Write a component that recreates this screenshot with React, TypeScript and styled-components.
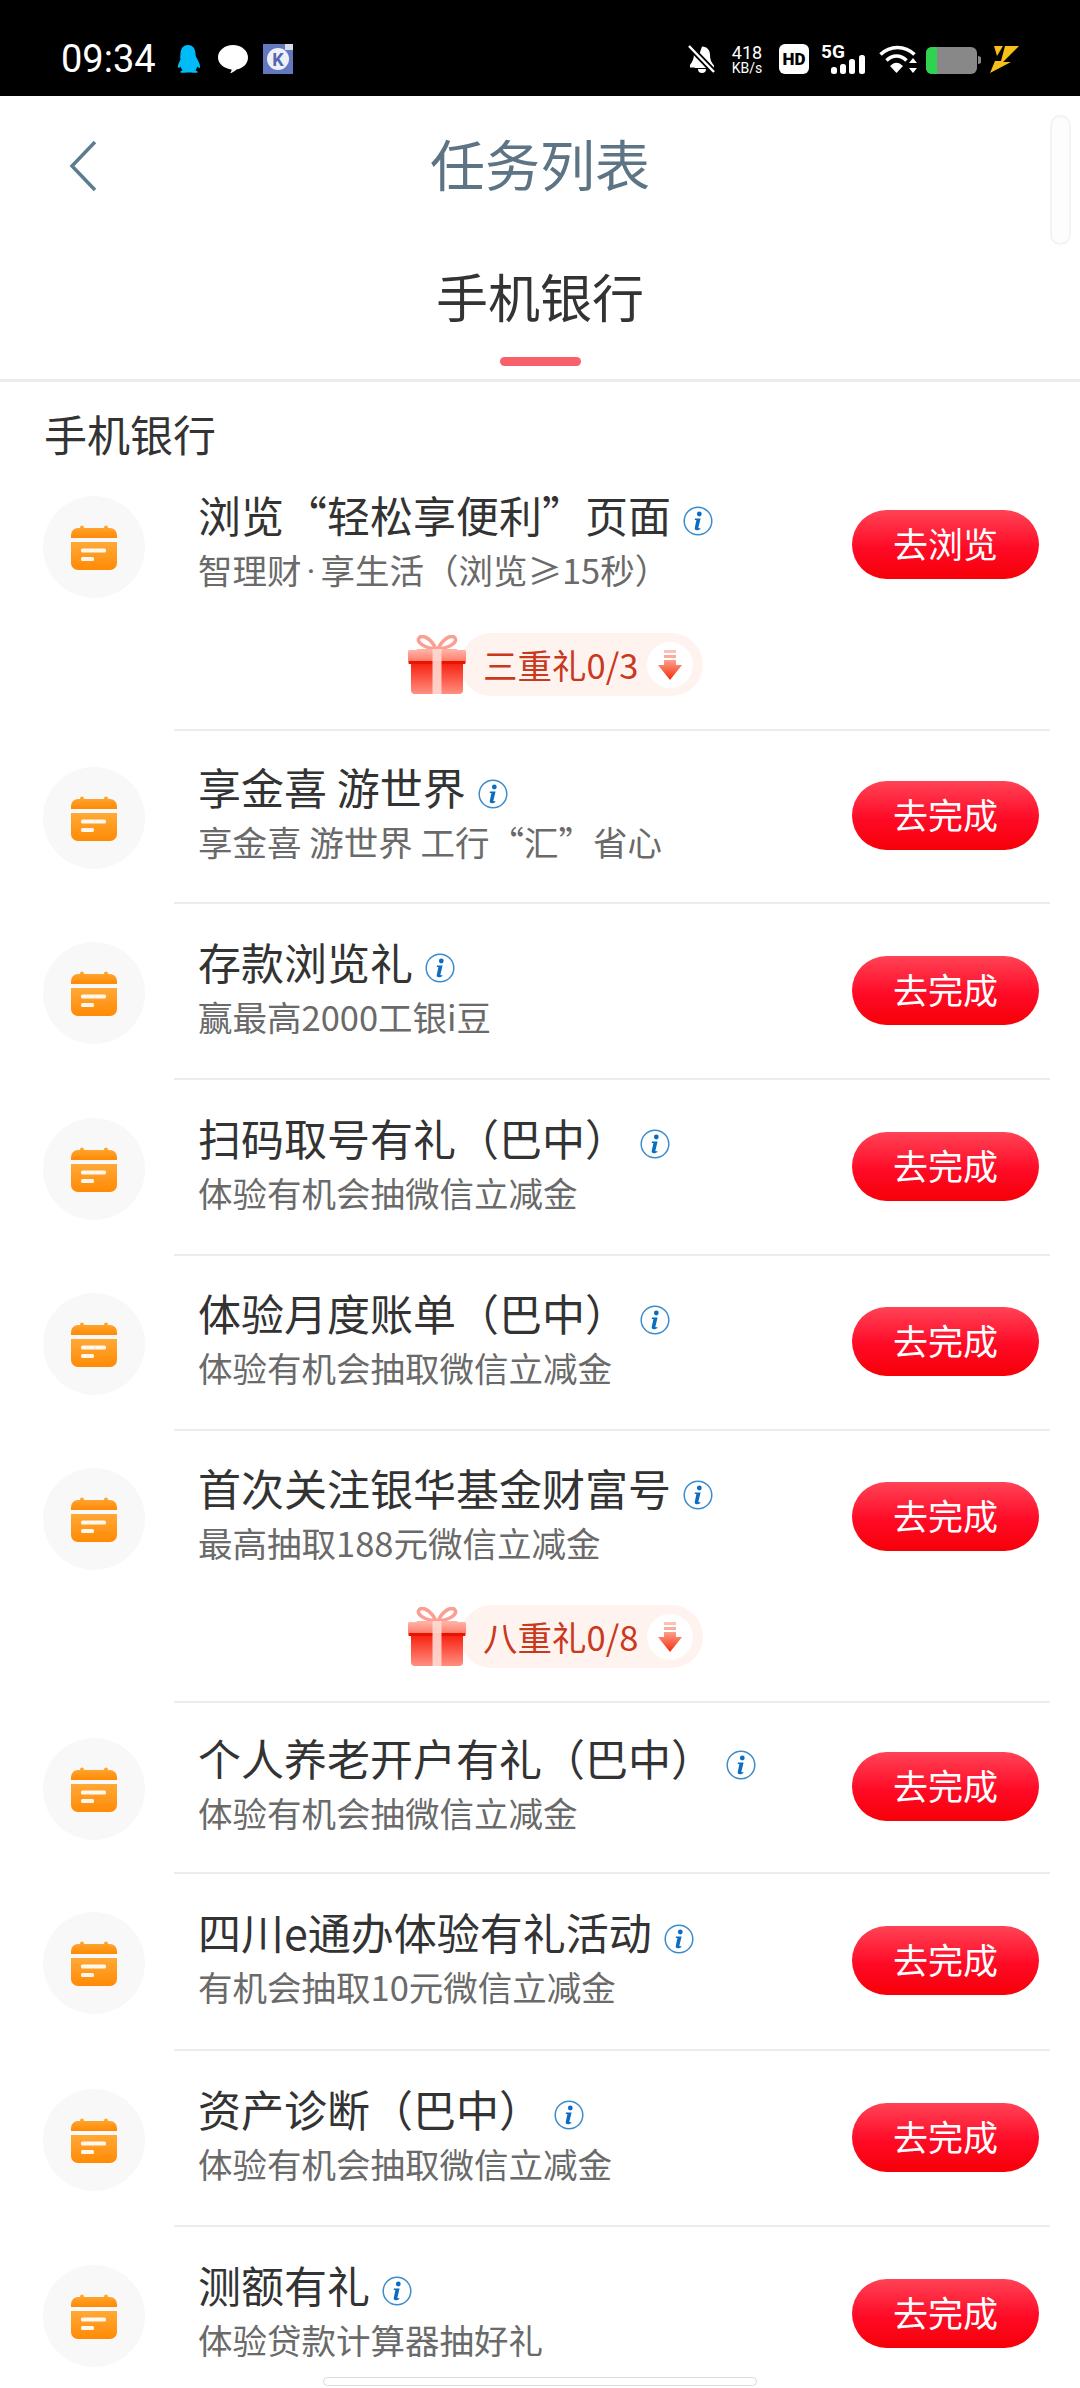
import React from "react";
import styled, { createGlobalStyle } from "styled-components";

const Global = createGlobalStyle`
  html, body { margin: 0; padding: 0; background: #fff; }
  body { width: 1080px; height: 2388px; overflow: hidden; font-family: "Noto Sans CJK SC", "Noto Sans", sans-serif; }
  * { box-sizing: border-box; }
`;

const Page = styled.div`
  position: relative;
  width: 1080px;
  height: 2388px;
  overflow: hidden;
  background: #fff;
`;

const StatusBar = styled.div`
  height: 96px;
  background: #000;
  display: flex;
  align-items: flex-start;
  justify-content: space-between;
  padding: 44px 61px 0 61px;
`;
const StatusGroup = styled.div`
  display: flex;
  align-items: center;
  height: 30px;
`;
const Clock = styled.span`
  font-family: Roboto, sans-serif;
  font-size: 38px;
  line-height: 30px;
  color: #fff;
  width: 96px;
  margin-right: 18px;
  white-space: nowrap;
`;
const Speed = styled.div`
  width: 36px;
  display: flex;
  flex-direction: column;
  align-items: center;
  font-family: Roboto, sans-serif;
  color: #fff;
  margin: 0 14px 0 13px;
`;
const SpeedNum = styled.span`
  font-size: 18px;
  line-height: 17px;
`;
const SpeedUnit = styled.span`
  font-size: 14px;
  line-height: 14px;
`;
const StatusIcon = styled.svg<{ $after?: number }>`
  display: block;
  flex: none;
  margin-right: ${(p) => p.$after ?? 0}px;
`;
const Signal = styled.div`
  position: relative;
  flex: none;
  width: 45px;
  height: 30px;
  margin-right: 13px;
`;
const FiveG = styled.span`
  position: absolute;
  left: 0;
  top: -1px;
  font-family: Roboto, sans-serif;
  font-weight: 700;
  font-size: 19px;
  line-height: 18px;
  color: #fff;
`;

const TitleBar = styled.div`
  height: 134px;
  display: flex;
  align-items: center;
  justify-content: center;
  position: relative;
`;
const BackIcon = styled.svg`
  position: absolute;
  left: 68px;
  top: 44px;
`;
const PageTitle = styled.h1`
  margin: -3px 0 0;
  font-size: 55px;
  font-weight: 400;
  line-height: 70px;
  color: #5d7484;
`;
const ScrollHint = styled.div`
  position: absolute;
  right: 9px;
  top: 115px;
  width: 21px;
  height: 130px;
  border: 2px solid #f1f3f7;
  border-radius: 11px;
  background: #fdfdfe;
`;
const Tabs = styled.div`
  height: 152px;
  border-bottom: 3px solid #ececec;
  display: flex;
  flex-direction: column;
  align-items: center;
`;
const TabText = styled.div`
  margin-top: 31px;
  font-size: 52px;
  line-height: 70px;
  color: #333;
`;
const TabMark = styled.div`
  margin-top: 26px;
  width: 81px;
  height: 9px;
  border-radius: 5px;
  background: #f8616c;
`;
const SectionTitle = styled.div`
  height: 77px;
  padding: 25px 0 0 44px;
  font-size: 43px;
  line-height: 52px;
  color: #333;
`;

const Task = styled.div<{ $height: number }>`
  display: flex;
  align-items: center;
  height: ${(p) => p.$height}px;
  padding: 0 41px 0 43px;
`;
const IconCircle = styled.div`
  flex: none;
  width: 102px;
  height: 102px;
  margin-top: 3px;
  border-radius: 50%;
  background: #f8f8f8;
  display: flex;
  align-items: center;
  justify-content: center;
`;
const TaskBody = styled.div`
  flex: 1;
  min-width: 0;
  margin: -12px 0 0 53px;
`;
const TitleLine = styled.div`
  display: flex;
  align-items: center;
  height: 56px;
`;
const TaskTitle = styled.span`
  font-size: 43px;
  line-height: 56px;
  color: #333;
  white-space: nowrap;
`;
const InfoIcon = styled.svg`
  flex: none;
  margin: 15px 0 0 12px;
`;
const TaskSub = styled.div`
  margin-top: 5px;
  font-size: 34.5px;
  line-height: 44px;
  color: #6a6a6a;
  white-space: nowrap;
`;
const MidDot = styled.span`
  display: inline-block;
  width: 0.55em;
  text-align: center;
  font-family: Roboto, sans-serif;
`;
const GoButton = styled.button`
  flex: none;
  width: 187px;
  height: 69px;
  margin-top: -2px;
  border: 0;
  padding: 0 0 3px;
  border-radius: 35px;
  background: linear-gradient(180deg, #ff4356 0%, #ff0a26 55%, #f60008 100%);
  color: #fff;
  font-family: inherit;
  font-size: 35px;
  line-height: 66px;
`;
const Divider = styled.div`
  height: 2px;
  margin: 0 30px 0 174px;
  background: #ececec;
`;
const GiftRow = styled.div`
  height: 97px;
  padding: 0 0 32px 407px;
  display: flex;
  align-items: center;
`;
const GiftIcon = styled.svg`
  flex: none;
  position: relative;
  z-index: 1;
  margin-right: -7px;
`;
const GiftPill = styled.div`
  width: 243px;
  height: 63px;
  padding-left: 23px;
  border-radius: 32px;
  background: #fff3f0;
  display: flex;
  align-items: center;
`;
const GiftText = styled.span`
  flex: none;
  width: 164px;
  font-size: 34.5px;
  line-height: 63px;
  color: #c9391c;
  white-space: nowrap;
`;
const ArrowDisc = styled.div`
  flex: none;
  width: 46px;
  height: 46px;
  border-radius: 50%;
  background: #fff;
  display: flex;
  align-items: center;
  justify-content: center;
`;
const HomeBar = styled.div`
  position: absolute;
  left: 323px;
  top: 2377px;
  width: 434px;
  height: 9px;
  border: 1px solid #dcdcdc;
  border-radius: 5px;
  background: #fff;
`;

const Calendar = () => (
  <svg width="46" height="46" viewBox="0 0 46 46">
    <defs>
      <linearGradient id="cal" x1="0" y1="0" x2="0" y2="1">
        <stop offset="0" stopColor="#ffa937" />
        <stop offset="1" stopColor="#ff8a05" />
      </linearGradient>
    </defs>
    <path d="M11 1.500a2 2 0 0 1 2 2V4h20v-.5a2 2 0 0 1 4 0V4h2a7 7 0 0 1 7 7v3H0v-3a7 7 0 0 1 7-7h2v-.5a2 2 0 0 1 2-2z" fill="url(#cal)" />
    <path d="M0 18h46v21a7 7 0 0 1-7 7H7a7 7 0 0 1-7-7z" fill="url(#cal)" />
    <rect x="10" y="24.500" width="25" height="4" rx="1.500" fill="#fff" opacity=".92" />
    <rect x="10" y="33" width="13" height="4" rx="1.500" fill="#fff" opacity=".92" />
  </svg>
);

const Info = () => (
  <InfoIcon width="30" height="30" viewBox="0 0 30 30">
    <circle cx="15" cy="15" r="13.800" fill="#fff" stroke="#3b8ccc" strokeWidth="1.500" />
    <circle cx="16.300" cy="8" r="2.400" fill="#0b6cc4" />
    <path d="M12 12.600h5.600l-2.200 9c-.2.9.5 1 1.800.3l.2 1c-2 1.500-6 2-5.700-.6l1.700-8.200c-.7 0-1.400 0-1.700-.1z" fill="#0b6cc4" />
  </InfoIcon>
);

const Gift = ({ id }: { id: string }) => (
  <GiftIcon width="60" height="60" viewBox="0 0 60 60">
    <defs>
      <linearGradient id={`${id}a`} x1="0" y1="0" x2="0" y2="1">
        <stop offset="0" stopColor="#ffb3a6" />
        <stop offset="1" stopColor="#ff6f5e" />
      </linearGradient>
      <linearGradient id={`${id}b`} x1="0" y1="0" x2="0" y2="1">
        <stop offset="0" stopColor="#f81d0c" />
        <stop offset="1" stopColor="#ff8f80" />
      </linearGradient>
    </defs>
    <path d="M29 14C24 3 15-1 12 3c-3 4 5 10 17 11zM31 14C36 3 45-1 48 3c3 4-5 10-17 11z" fill="none" stroke="#fb9f92" strokeWidth="3.500" />
    <path d="M10 14h40l1 2H9z" fill="#fbb0a4" />
    <rect x="1" y="15" width="58" height="14" rx="1.500" fill={`url(#${id}a)`} />
    <path d="M4 27h52v28a4 4 0 0 1-4 4H8a4 4 0 0 1-4-4z" fill={`url(#${id}b)`} />
    <rect x="2" y="26" width="56" height="3" fill="#e81400" />
    <rect x="25.500" y="14" width="9" height="45" fill="#ffd9d2" opacity=".9" />
  </GiftIcon>
);

const DownArrow = ({ id }: { id: string }) => (
  <svg width="24" height="30" viewBox="0 0 24 30">
    <defs>
      <linearGradient id={id} x1="0" y1="0" x2="0" y2="1">
        <stop offset="0" stopColor="#ff9f8c" />
        <stop offset="1" stopColor="#f52b08" />
      </linearGradient>
    </defs>
    <rect x="6" y="0" width="12" height="3" fill="#fcc0b5" />
    <rect x="6" y="5" width="12" height="3" fill="#fcab9c" />
    <path d="M6 10h12v5h6L12 30 0 15h6z" fill={`url(#${id})`} />
  </svg>
);

type Item = { title: string; sub: React.ReactNode; height: number; action?: string; gift?: string };

const items: Item[] = [
  { title: "浏览“轻松享便利”页面", sub: <>智理财<MidDot>·</MidDot>享生活（浏览≥15秒）</>, height: 173, action: "去浏览", gift: "三重礼0/3" },
  { title: "享金喜 游世界", sub: "享金喜 游世界 工行“汇”省心", height: 171 },
  { title: "存款浏览礼", sub: "赢最高2000工银i豆", height: 174 },
  { title: "扫码取号有礼（巴中）", sub: "体验有机会抽微信立减金", height: 174 },
  { title: "体验月度账单（巴中）", sub: "体验有机会抽取微信立减金", height: 173 },
  { title: "首次关注银华基金财富号", sub: "最高抽取188元微信立减金", height: 173, gift: "八重礼0/8" },
  { title: "个人养老开户有礼（巴中）", sub: "体验有机会抽微信立减金", height: 169 },
  { title: "四川e通办体验有礼活动", sub: "有机会抽取10元微信立减金", height: 175 },
  { title: "资产诊断（巴中）", sub: "体验有机会抽取微信立减金", height: 174 },
  { title: "测额有礼", sub: "体验贷款计算器抽好礼", height: 174 },
];

export default function App() {
  return (
    <Page lang="zh-CN">
      <Global />
      <StatusBar>
        <StatusGroup>
          <Clock>09:34</Clock>
          <StatusIcon width="26" height="30" viewBox="0 0 26 30" $after={17}>
            <path d="M13 1c5.500 0 7.500 4.500 7.500 9 0 2 .6 3 2 5.500 1.600 2.800 3 6 2.400 8-.4 1-1.500.4-2.500-1-.3 1.500-1 2.800-2 3.800 1.500.5 2.600 1.200 2.300 2-.3.7-3.500.7-6.700.3-1.500-.2-2.500-.2-4 0-3.200.4-6.400.4-6.700-.3-.3-.8.8-1.500 2.300-2-1-1-1.700-2.300-2-3.800-1 1.400-2.100 2-2.500 1-.6-2 .8-5.200 2.400-8C4.900 13 5.500 12 5.500 10 5.500 5.500 7.500 1 13 1z" fill="#00bbf6" />
          </StatusIcon>
          <StatusIcon width="30" height="30" viewBox="0 0 30 30" $after={15}>
            <path d="M15 1c8.300 0 15 5.500 15 12.500 0 6-5 11-11.500 12-1.800 1.800-4 3.200-6.500 3.800 1-1.300 1.600-2.600 1.700-3.900C6 24.600 0 19.800 0 13.500 0 6.500 6.700 1 15 1z" fill="#fff" />
          </StatusIcon>
          <StatusIcon width="30" height="30" viewBox="0 0 30 30">
            <rect width="30" height="30" fill="#6478c0" />
            <path d="M22 0h8v6h-8z" fill="#d8dce8" />
            <circle cx="15" cy="15" r="11" fill="#eef0f8" />
            <text x="15" y="21.500" textAnchor="middle" fontFamily="Roboto, sans-serif" fontWeight="700" fontSize="18" fill="#5468b0">K</text>
          </StatusIcon>
        </StatusGroup>
        <StatusGroup>
          <StatusIcon width="28" height="28" viewBox="0 0 28 28">
            <path d="M14 1c5 0 8 3.500 8 8.500 0 4 1 7 4 10.500v2.500H6.500z" fill="#fff" transform="translate(0 .5)" />
            <path d="M6 9c0 4-1.500 8-4 11v2.500h16z" fill="#fff" />
            <path d="M10 24h8a4 4 0 0 1-8 0z" fill="#fff" />
            <path d="M1 1l25 26" stroke="#000" strokeWidth="6" />
            <path d="M1 1l25 26" stroke="#fff" strokeWidth="2.500" />
          </StatusIcon>
          <Speed>
            <SpeedNum>418</SpeedNum>
            <SpeedUnit>KB/s</SpeedUnit>
          </Speed>
          <StatusIcon width="30" height="30" viewBox="0 0 30 30" $after={12}>
            <rect width="30" height="30" rx="6" fill="#fff" />
            <text x="15" y="21" textAnchor="middle" fontFamily="Roboto, sans-serif" fontWeight="900" fontSize="17" fill="#000">HD</text>
          </StatusIcon>
          <Signal>
            <FiveG>5G</FiveG>
            <svg width="45" height="30" viewBox="0 0 45 30">
              <rect x="10" y="23" width="6" height="7" rx="2.500" fill="#fff" />
              <rect x="19" y="20" width="6" height="10" rx="2.500" fill="#fff" />
              <rect x="28" y="15" width="6" height="15" rx="2.500" fill="#fff" />
              <rect x="38" y="11" width="6" height="19" rx="2.500" fill="#fff" />
            </svg>
          </Signal>
          <StatusIcon width="38" height="30" viewBox="0 0 38 30" $after={9}>
            <g fill="none" stroke="#fff" strokeWidth="3.500">
              <path d="M1.500 10.500C11 1 26 1 35.500 10.500" />
              <path d="M7.500 16.500c6-6 14-6 20 0" />
            </g>
            <path d="M11 22c4.500-4.500 8.500-4.500 13 0l-6.500 7z" fill="#fff" />
            <path d="M34 14l4 5h-8zM34 29l-4-5h8z" fill="#fff" />
          </StatusIcon>
          <StatusIcon width="55" height="30" viewBox="0 0 55 30" $after={8}>
            <rect x="0" y="3" width="51" height="27" rx="6" fill="#888" />
            <path d="M6 3h5v27H6a6 6 0 0 1-6-6V9a6 6 0 0 1 6-6z" fill="#2ed44f" />
            <path d="M52 12c2 0 3 1 3 2v4c0 1-1 2-3 2z" fill="#888" />
          </StatusIcon>
          <StatusIcon width="30" height="30" viewBox="0 0 30 30">
            <path d="M5 2h9L8 12z" fill="#f7bf18" />
            <path d="M16 2h14L14 18h8L1 29l5-12h6z" fill="#f7bf18" />
          </StatusIcon>
        </StatusGroup>
      </StatusBar>

      <TitleBar>
        <BackIcon width="32" height="52" viewBox="0 0 32 52">
          <path d="M27 2L4 26l23 24" fill="none" stroke="#5d7d8e" strokeWidth="3.500" />
        </BackIcon>
        <PageTitle>任务列表</PageTitle>
      </TitleBar>
      <ScrollHint />
      <Tabs>
        <TabText>手机银行</TabText>
        <TabMark />
      </Tabs>
      <SectionTitle>手机银行</SectionTitle>

      {items.map((it, i) => (
        <React.Fragment key={it.title}>
          <Task $height={it.height}>
            <IconCircle>
              <Calendar />
            </IconCircle>
            <TaskBody>
              <TitleLine>
                <TaskTitle>{it.title}</TaskTitle>
                <Info />
              </TitleLine>
              <TaskSub>{it.sub}</TaskSub>
            </TaskBody>
            <GoButton>{it.action ?? "去完成"}</GoButton>
          </Task>
          {it.gift && (
            <GiftRow>
              <Gift id={`g${i}`} />
              <GiftPill>
                <GiftText>{it.gift}</GiftText>
                <ArrowDisc>
                  <DownArrow id={`d${i}`} />
                </ArrowDisc>
              </GiftPill>
            </GiftRow>
          )}
          {i < items.length - 1 && <Divider />}
        </React.Fragment>
      ))}
      <HomeBar />
    </Page>
  );
}
